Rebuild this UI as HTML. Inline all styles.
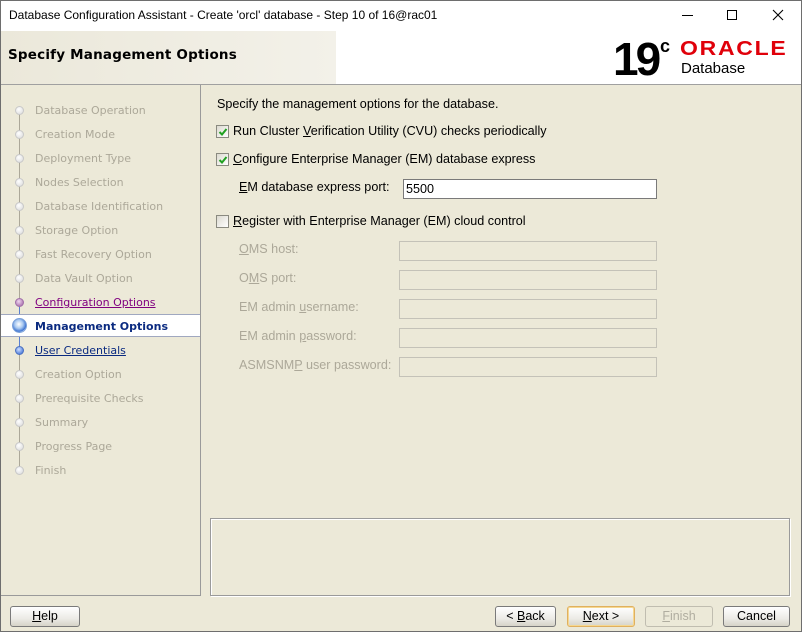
<!DOCTYPE html>
<html><head><meta charset="utf-8"><style>
*{box-sizing:border-box;margin:0;padding:0}
body{width:802px;height:632px;background:#ece9d8;font-family:"DejaVu Sans",sans-serif;font-size:11px;color:#000;position:relative;overflow:hidden}
.abs{position:absolute}
#tb{left:0;top:0;width:802px;height:31px;background:#fff;font-family:"Liberation Sans",sans-serif;font-size:12px}
#hdr{left:0;top:31px;width:802px;height:54px;background:#fff;border-bottom:1px solid #a0a0a0}
#hdrl{left:0;top:31px;width:336px;height:53px;background:linear-gradient(90deg,#ebe8da,#f3f1e9)}
.nav{left:35px;color:#aca899;white-space:nowrap}
.dot{width:9px;height:9px;border-radius:50%;background:radial-gradient(circle at 40% 35%,#fff,#d8d8d8);border:1px solid #c8c8c8}
.lbl{color:#aca899;left:239px}
.fld{left:399px;width:258px;height:20px;border:1px solid #c4c2b8;background:#ece9d8}
.cb{width:13px;height:13px;border:1px solid #8a8a80;background:linear-gradient(135deg,#dcdad0,#fff);left:216px}
.btn{top:606px;height:21px;border:1px solid #7a7a7a;border-radius:3px;background:linear-gradient(#fff,#ecebe6 60%,#d6d3c8);text-align:center;line-height:19px;font-family:"Liberation Sans",sans-serif;font-size:12.5px}
u{text-decoration:underline}
#frame{left:0;top:0;width:802px;height:632px;border:1px solid #6e6e6e;pointer-events:none}
.m{font-family:'Liberation Sans',sans-serif;font-size:12.6px}
</style></head><body>
<div class="abs" id="tb"><span class="abs" style="left:9px;top:8px">Database Configuration Assistant - Create 'orcl' database - Step 10 of 16@rac01</span>
<div class="abs" style="left:682px;top:15px;width:11px;height:1px;background:#000"></div>
<div class="abs" style="left:727px;top:10px;width:10px;height:10px;border:1px solid #000"></div>
<svg class="abs" style="left:772px;top:9px" width="12" height="12"><path d="M1 1L11 11M11 1L1 11" stroke="#000" stroke-width="1.1"/></svg>
</div>
<div class="abs" id="hdr"></div><div class="abs" id="hdrl"></div>
<div class="abs" style="left:8px;top:47px;font-weight:bold;font-size:13.5px;letter-spacing:.2px">Specify Management Options</div>
<div class="abs" style="left:613px;top:34px;font-family:'Liberation Sans',sans-serif;font-weight:bold;font-size:46px;letter-spacing:-3px;line-height:50px">19</div>
<div class="abs" style="left:660px;top:36px;font-family:'Liberation Sans',sans-serif;font-weight:bold;font-size:18px">c</div>
<div class="abs" style="left:680px;top:38px;font-family:'Liberation Sans',sans-serif;font-weight:bold;font-size:20px;color:#e0000a;letter-spacing:1.5px;transform:scaleX(1.15);transform-origin:left">ORACLE</div>
<div class="abs" style="left:681px;top:60px;font-family:'Liberation Sans',sans-serif;font-size:15px">Database</div>
<!-- left nav -->
<div class="abs" style="left:0;top:85px;width:201px;height:511px;border-right:1px solid #9a9a9a;border-bottom:1px solid #9a9a9a"></div>
<div class="abs" style="left:19px;top:112px;width:1px;height:190px;background:#aca899"></div>
<div class="abs" style="left:19px;top:302px;width:1px;height:48px;background:#5a7fd0"></div>
<div class="abs" style="left:19px;top:350px;width:1px;height:120px;background:#aca899"></div>
<div class="abs" style="left:0;top:314px;width:200px;height:23px;background:#fff;border-top:1px solid #a0a8c0;border-bottom:1px solid #a0a8c0"></div>
<div class="abs dot" style="left:15px;top:106px"></div><div class="abs nav" style="top:104px">Database Operation</div>
<div class="abs dot" style="left:15px;top:130px"></div><div class="abs nav" style="top:128px">Creation Mode</div>
<div class="abs dot" style="left:15px;top:154px"></div><div class="abs nav" style="top:152px">Deployment Type</div>
<div class="abs dot" style="left:15px;top:178px"></div><div class="abs nav" style="top:176px">Nodes Selection</div>
<div class="abs dot" style="left:15px;top:202px"></div><div class="abs nav" style="top:200px">Database Identification</div>
<div class="abs dot" style="left:15px;top:226px"></div><div class="abs nav" style="top:224px">Storage Option</div>
<div class="abs dot" style="left:15px;top:250px"></div><div class="abs nav" style="top:248px">Fast Recovery Option</div>
<div class="abs dot" style="left:15px;top:274px"></div><div class="abs nav" style="top:272px">Data Vault Option</div>
<div class="abs dot" style="left:15px;top:298px;background:radial-gradient(circle at 40% 35%,#f0d8f0,#9a5aa0);border-color:#a070a8"></div><div class="abs nav" style="top:296px;color:#800080;text-decoration:underline">Configuration Options</div>
<div class="abs" style="left:12px;top:318px;width:15px;height:15px;border-radius:50%;border:1px solid #7aa0d8;background:radial-gradient(circle at 45% 40%,#fff,#a8c8f0 40%,#3a70d0 70%,#d8e6f8 75%)"></div><div class="abs nav" style="top:320px;color:#0a2a80;font-weight:bold">Management Options</div>
<div class="abs dot" style="left:15px;top:346px;background:radial-gradient(circle at 40% 35%,#d0e0ff,#2a60d0);border-color:#4a70c0"></div><div class="abs nav" style="top:344px;color:#0a2a80;text-decoration:underline">User Credentials</div>
<div class="abs dot" style="left:15px;top:370px"></div><div class="abs nav" style="top:368px">Creation Option</div>
<div class="abs dot" style="left:15px;top:394px"></div><div class="abs nav" style="top:392px">Prerequisite Checks</div>
<div class="abs dot" style="left:15px;top:418px"></div><div class="abs nav" style="top:416px">Summary</div>
<div class="abs dot" style="left:15px;top:442px"></div><div class="abs nav" style="top:440px">Progress Page</div>
<div class="abs dot" style="left:15px;top:466px"></div><div class="abs nav" style="top:464px">Finish</div>
<!-- main -->
<div class="m">
<div class="abs" style="left:217px;top:97px">Specify the management options for the database.</div>
<div class="abs cb" style="top:125px"></div><svg class="abs" style="left:218px;top:127px" width="10" height="10"><path d="M1.5 5L4 7.5L8.5 2" stroke="#21a121" stroke-width="2" fill="none"/></svg>
<div class="abs" style="left:233px;top:124px">Run Cluster <u>V</u>erification Utility (CVU) checks periodically</div>
<div class="abs cb" style="top:153px"></div><svg class="abs" style="left:218px;top:155px" width="10" height="10"><path d="M1.5 5L4 7.5L8.5 2" stroke="#21a121" stroke-width="2" fill="none"/></svg>
<div class="abs" style="left:233px;top:152px"><u>C</u>onfigure Enterprise Manager (EM) database express</div>
<div class="abs" style="left:239px;top:180px"><u>E</u>M database express port:</div>
<div class="abs" style="left:403px;top:179px;width:254px;height:20px;border:1px solid #7a7a7a;background:#fff;padding:2px 0 0 2px">5500</div>
<div class="abs cb" style="top:215px"></div>
<div class="abs" style="left:233px;top:214px"><u>R</u>egister with Enterprise Manager (EM) cloud control</div>
<div class="abs lbl" style="top:242px"><u>O</u>MS host:</div><div class="abs fld" style="top:241px"></div>
<div class="abs lbl" style="top:271px">O<u>M</u>S port:</div><div class="abs fld" style="top:270px"></div>
<div class="abs lbl" style="top:300px">EM admin <u>u</u>sername:</div><div class="abs fld" style="top:299px"></div>
<div class="abs lbl" style="top:329px">EM admin <u>p</u>assword:</div><div class="abs fld" style="top:328px"></div>
<div class="abs lbl" style="top:358px">ASMSNM<u>P</u> user password:</div><div class="abs fld" style="top:357px"></div>
</div>
<div class="abs" style="left:210px;top:518px;width:580px;height:78px;border:1px solid #9a9a9a;box-shadow:inset 1px 1px 0 #fff,1px 1px 0 #fff"></div>
<div class="abs btn" style="left:10px;width:70px"><u>H</u>elp</div>
<div class="abs btn" style="left:495px;width:61px">&lt; <u>B</u>ack</div>
<div class="abs btn" style="left:567px;width:68px;border-color:#e0b060;box-shadow:inset 0 0 0 1px #f6d890"><u>N</u>ext &gt;</div>
<div class="abs btn" style="left:645px;width:68px;color:#b0ada0;border-color:#c0bdb0;background:#ece9d8"><u>F</u>inish</div>
<div class="abs btn" style="left:723px;width:67px">Cancel</div>
<div class="abs" id="frame"></div>
</body></html>
